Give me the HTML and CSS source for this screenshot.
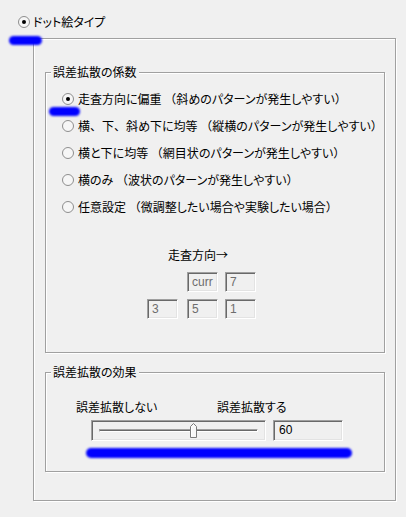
FILE: index.html
```html
<!DOCTYPE html>
<html lang="ja">
<head>
<meta charset="utf-8">
<title>ドット絵タイプ</title>
<link rel="stylesheet" href="styles.css">
</head>
<body>
<div class="page">
  <div class="radio-row top">
    <svg class="radio" viewBox="0 0 12 12" width="12" height="12"><circle cx="6" cy="6" r="5.5" fill="#f6f6f6" stroke="#8e8e8e"/><circle cx="6" cy="6" r="2" fill="#000"/></svg>
    <span>ドット絵タイプ</span>
  </div>
  <div class="outer">
    <div class="group g1">
      <div class="group-title">誤差拡散の係数</div>
      <div class="radios">
        <div class="radio-row"><svg class="radio" viewBox="0 0 12 12" width="12" height="12"><circle cx="6" cy="6" r="5.5" fill="#f6f6f6" stroke="#8e8e8e"/><circle cx="6" cy="6" r="2" fill="#000"/></svg><span>走査方向に偏重 <span class="fw">（</span>斜めのパターンが発生しやすい<span class="fw">）</span></span></div>
        <div class="radio-row"><svg class="radio" viewBox="0 0 12 12" width="12" height="12"><circle cx="6" cy="6" r="5.5" fill="#f6f6f6" stroke="#8e8e8e"/></svg><span>横<span class="fw">、</span>下<span class="fw">、</span>斜め下に均等 <span class="fw">（</span>縦横のパターンが発生しやすい<span class="fw">）</span></span></div>
        <div class="radio-row"><svg class="radio" viewBox="0 0 12 12" width="12" height="12"><circle cx="6" cy="6" r="5.5" fill="#f6f6f6" stroke="#8e8e8e"/></svg><span>横と下に均等 <span class="fw">（</span>網目状のパターンが発生しやすい<span class="fw">）</span></span></div>
        <div class="radio-row"><svg class="radio" viewBox="0 0 12 12" width="12" height="12"><circle cx="6" cy="6" r="5.5" fill="#f6f6f6" stroke="#8e8e8e"/></svg><span>横のみ <span class="fw">（</span>波状のパターンが発生しやすい<span class="fw">）</span></span></div>
        <div class="radio-row"><svg class="radio" viewBox="0 0 12 12" width="12" height="12"><circle cx="6" cy="6" r="5.5" fill="#f6f6f6" stroke="#8e8e8e"/></svg><span>任意設定 <span class="fw">（</span>微調整したい場合や実験したい場合<span class="fw">）</span></span></div>
      </div>
      <div class="dir-label">走査方向→</div>
      <div class="kernel">
        <div class="cell-empty"></div>
        <div class="tb">curr</div>
        <div class="tb">7</div>
        <div class="tb">3</div>
        <div class="tb">5</div>
        <div class="tb">1</div>
      </div>
    </div>
    <div class="group g2">
      <div class="group-title">誤差拡散の効果</div>
      <div class="labels"><span>誤差拡散しない</span><span>誤差拡散する</span></div>
      <div class="slider-row">
        <div class="slider">
          <div class="track"></div>
          <svg class="thumb" viewBox="0 0 7 15" width="7" height="15"><path d="M0.5 14.5 V3.5 L3.5 0.5 L6.5 3.5 V14.5 Z" fill="#f7f7f7" stroke="#7a7a7a"/><path d="M1.5 13.5 V4 L3.5 2" fill="none" stroke="#fff"/></svg>
        </div>
        <div class="tb wide">60</div>
      </div>
    </div>
  </div>
  <div class="mark m1"></div>
  <div class="mark m2"></div>
  <div class="mark m3"></div>
</div>
</body>
</html>
```
FILE: styles.css
```css
html, body {
  margin: 0;
  padding: 0;
  background: #f0f0f0;
}
.page {
  position: relative;
  width: 406px;
  height: 517px;
  overflow: hidden;
  font-family: "Noto Sans CJK JP", "Noto Sans", sans-serif;
  font-size: 12px;
  color: #000;
  font-feature-settings: "palt";
}
.fw {
  font-feature-settings: normal;
}
.radio-row {
  display: flex;
  align-items: center;
  height: 14px;
  line-height: 14px;
  white-space: nowrap;
}
.radio {
  flex: none;
  margin-right: 4px;
}
.radio-row.top {
  padding-top: 15px;
  padding-left: 18px;
}
.radio-row.top .radio {
  margin-right: 3px;
}
.outer {
  box-sizing: border-box;
  margin: 9px 0 0 33px;
  width: 363px;
  height: 463px;
  border: 1px solid #a0a0a0;
  box-shadow: inset 1px 1px 0 #fff, 1px 1px 0 #fff;
  padding: 33px 0 0 11px;
}
.group {
  box-sizing: border-box;
  width: 340px;
  border: 1px solid #a0a0a0;
  box-shadow: inset 1px 1px 0 #fff, 1px 1px 0 #fff;
}
.g1 {
  height: 281px;
}
.g2 {
  height: 100px;
  margin-top: 19px;
}
.group-title {
  width: fit-content;
  height: 14px;
  line-height: 14px;
  margin: -8px 0 0 5px;
  padding: 0 2px;
  background: #f0f0f0;
  white-space: nowrap;
}
.radios {
  display: flex;
  flex-direction: column;
  gap: 13px;
  padding: 13px 0 0 16px;
}
.dir-label {
  height: 14px;
  line-height: 14px;
  margin-top: 34px;
  padding-left: 122px;
}
.kernel {
  display: grid;
  grid-template-columns: 40px 38px 31px;
  grid-auto-rows: 20px;
  row-gap: 7px;
  margin-top: 10px;
  padding-left: 101px;
}
.tb {
  box-sizing: border-box;
  width: 31px;
  height: 20px;
  border: 1px solid;
  border-color: #a0a0a0 #fff #fff #a0a0a0;
  box-shadow: inset 1px 1px 0 #696969, inset -1px -1px 0 #e3e3e3;
  padding-left: 4px;
  font-family: "Liberation Sans", Arial, sans-serif;
  font-size: 12px;
  line-height: 18px;
  color: #6d6d6d;
  background: #f0f0f0;
}
.tb.wide {
  width: 70px;
  height: 21px;
  line-height: 19px;
  color: #000;
  padding-left: 5px;
}
.labels {
  display: grid;
  grid-template-columns: 141px auto;
  height: 14px;
  line-height: 14px;
  margin-top: 21px;
  padding-left: 30px;
  white-space: nowrap;
}
.slider-row {
  display: flex;
  gap: 7px;
  margin-top: 6px;
  padding-left: 45px;
}
.slider {
  position: relative;
  box-sizing: border-box;
  width: 175px;
  height: 21px;
  border: 1px solid;
  border-color: #a0a0a0 #fff #fff #a0a0a0;
  box-shadow: inset 1px 1px 0 #696969, inset -1px -1px 0 #e3e3e3;
  padding: 8px 0 0 7px;
}
.track {
  box-sizing: border-box;
  width: 159px;
  height: 3px;
  border: 1px solid;
  border-color: #a0a0a0 #fff #fff #a0a0a0;
  background: #696969;
}
.thumb {
  position: absolute;
  left: 98px;
  top: 2px;
}
.mark {
  position: absolute;
  background: #0000ff;
  border-radius: 5px;
  filter: blur(0.8px);
}
.m1 {
  left: 9px;
  top: 36px;
  width: 33px;
  height: 9px;
}
.m2 {
  left: 49px;
  top: 107px;
  width: 31px;
  height: 9px;
}
.m3 {
  left: 86px;
  top: 448px;
  width: 266px;
  height: 10px;
}
```
